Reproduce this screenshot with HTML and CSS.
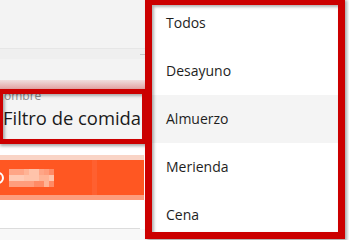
FILE: index.html
```html
<!DOCTYPE html>
<html lang="es">
<head>
    <meta charset="UTF-8">
    <meta name="viewport" content="width=device-width, initial-scale=1.0">
    <title>Filtro de comida</title>
    <link rel="stylesheet" href="styles.css">
</head>
<body>

    <div class="screen">
        <!-- formulario de fondo -->
        <div class="form">
            <div class="band top"></div>
            <div class="band rule"></div>
            <div class="band strip"><span class="tick"></span></div>
            <div class="band fill"></div>
            <div class="band pink"></div>

            <div class="field">
                <span class="label">Nombre</span>
                <span class="value">Filtro de comida</span>
            </div>

            <div class="band white"></div>
            <div class="band btn-top"></div>
            <div class="button">
                <span class="icon"></span>
                <div class="mosaic">
                    <i class="c1 w3"></i><i class="c2"></i><i class="c3 w2"></i><i class="c1"></i><i class="c4"></i><i class="c5"></i>
                    <i class="c6 w3"></i><i class="c3 w3"></i><i class="c2 w2"></i><i class="c3"></i>
                    <i class="c4 w5"></i><i class="c5 w2"></i><i class="c2"></i><i class="c5"></i>
                </div>
                <span class="seam"></span>
            </div>
            <div class="band btn-bottom"></div>
            <div class="band white2"></div>
            <div class="band line"></div>
            <div class="band foot"></div>
        </div>

        <!-- menu desplegable -->
        <ul class="menu">
            <li>Todos</li>
            <li>Desayuno</li>
            <li class="active">Almuerzo</li>
            <li>Merienda</li>
            <li>Cena</li>
        </ul>

        <!-- marcos rojos -->
        <div class="mark mark-field"></div>
        <div class="mark mark-menu"></div>
    </div>

</body>
</html>
```

FILE: styles.css
```css
body {
    margin: 0;
    background-color: #fff;
    font-family: 'Open Sans', 'Noto Sans', sans-serif;
    color: #212121;
    overflow: hidden;
}

.screen {
    position: relative;
    width: 349px;
    height: 240px;
    overflow: hidden;
}

.form {
    width: 146px;
    display: flex;
    flex-direction: column;
}

.band {
    flex: none;
}

.top {
    height: 48px;
    background-color: #f3f3f3;
}

.rule {
    height: 1px;
    background-color: #e6e6e6;
}

.strip {
    height: 10px;
    background-color: #efefef;
    display: flex;
    justify-content: flex-end;
    align-items: center;
}

.tick {
    width: 5px;
    height: 1px;
    background-color: #c8c8c8;
    margin-right: 1px;
}

.fill {
    height: 21px;
    background-color: #f3f3f3;
}

.pink {
    height: 9px;
    background: linear-gradient(#f0dede, #e3a2a2);
}

.field {
    height: 55px;
    background-color: #f4f4f4;
    display: flex;
    flex-direction: column;
    padding-left: 3px;
    box-sizing: border-box;
}

.label {
    font-size: 12px;
    color: #8a8a8a;
    line-height: 12px;
    margin-top: 1px;
    margin-left: -8px;
}

.value {
    font-size: 18.4px;
    line-height: 24px;
    margin-top: 4px;
    color: #1a1a1a;
    white-space: nowrap;
}

.white {
    height: 11px;
    background-color: #fff;
}

.btn-top {
    height: 5px;
    margin-right: 2px;
    background-color: #f9d4c6;
}

.button {
    position: relative;
    height: 35px;
    margin-right: 2px;
    background-color: #ff5722;
    display: flex;
    align-items: center;
}

.icon {
    width: 8px;
    height: 8px;
    border: 2px solid #fff;
    border-radius: 50%;
    margin-left: -8px;
}

.mosaic {
    display: grid;
    grid-template-columns: repeat(9, 5px);
    grid-auto-rows: 6px;
    margin-left: 5px;
}

.mosaic i {
    display: block;
}

.mosaic .w2 { grid-column: span 2; }
.mosaic .w3 { grid-column: span 3; }
.mosaic .w5 { grid-column: span 5; }

.c1 { background-color: #ffa586; }
.c2 { background-color: #ffb395; }
.c3 { background-color: #ffc3aa; }
.c4 { background-color: #ff9d7c; }
.c5 { background-color: #ff8b66; }
.c6 { background-color: #ffcab4; }

.seam {
    position: absolute;
    left: 92px;
    top: 0;
    width: 5px;
    height: 100%;
    background-color: #ff6030;
}

.btn-bottom {
    height: 5px;
    margin-right: 2px;
    background-color: #fd9d7d;
}

.white2 {
    height: 28px;
    background-color: #fff;
}

.line {
    height: 1px;
    margin-right: 6px;
    background-color: #dcdcdc;
}

.foot {
    height: 11px;
    background-color: #f8f8f8;
}

.menu {
    position: absolute;
    left: 150px;
    top: -9px;
    width: 192px;
    margin: 0;
    padding: 8px 0;
    list-style: none;
    background-color: #fff;
}

.menu li {
    height: 48px;
    line-height: 48px;
    padding: 0 16px;
    font-size: 14px;
    color: #1e1e1e;
}

.menu li.active {
    background-color: #f4f4f4;
}

.mark {
    position: absolute;
    box-sizing: border-box;
    border: solid #cc0000;
    box-shadow: 2px 2px 3px rgba(0, 0, 0, 0.35), inset 2px 2px 3px rgba(0, 0, 0, 0.3);
}

.mark-field {
    left: -2px;
    top: 89px;
    width: 149px;
    height: 55px;
    border-width: 5px;
}

.mark-menu {
    left: 145px;
    top: -2px;
    width: 200px;
    height: 241px;
    border-width: 7px;
}
```
